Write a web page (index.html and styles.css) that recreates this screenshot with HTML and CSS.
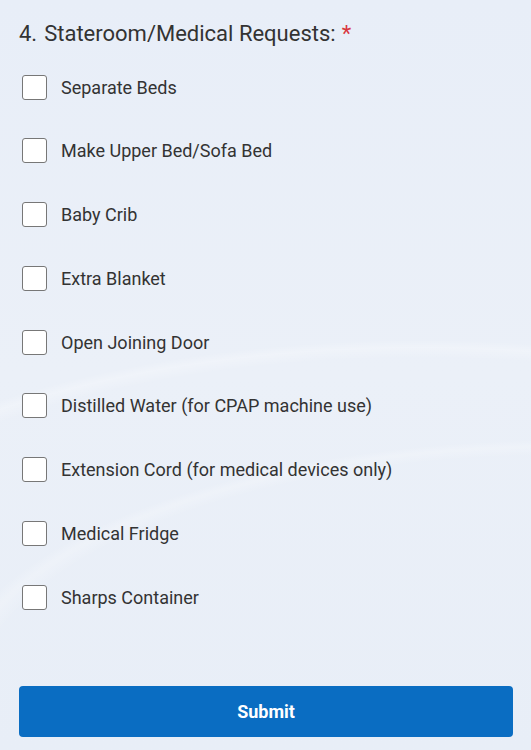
FILE: index.html
```html
<!DOCTYPE html>
<html lang="en">
<head>
<meta charset="utf-8">
<title>Stateroom/Medical Requests</title>
<link rel="stylesheet" href="styles.css">
</head>
<body>
<form class="form">
  <h2 class="question"><span class="num">4.</span><span class="qtext">Stateroom/Medical Requests:</span><span class="req">*</span></h2>
  <ul class="options">
    <li class="option"><span class="box"></span><span class="label">Separate Beds</span></li>
    <li class="option"><span class="box"></span><span class="label">Make Upper Bed/Sofa Bed</span></li>
    <li class="option"><span class="box"></span><span class="label">Baby Crib</span></li>
    <li class="option"><span class="box"></span><span class="label">Extra Blanket</span></li>
    <li class="option"><span class="box"></span><span class="label">Open Joining Door</span></li>
    <li class="option"><span class="box"></span><span class="label">Distilled Water (for CPAP machine use)</span></li>
    <li class="option"><span class="box"></span><span class="label">Extension Cord (for medical devices only)</span></li>
    <li class="option"><span class="box"></span><span class="label">Medical Fridge</span></li>
    <li class="option"><span class="box"></span><span class="label">Sharps Container</span></li>
  </ul>
  <button type="button" class="submit">Submit</button>
</form>
</body>
</html>
```
FILE: styles.css
```css
html, body {
  margin: 0;
  padding: 0;
}
body {
  width: 531px;
  height: 750px;
  overflow: hidden;
  font-family: Roboto, "Liberation Sans", Arial, sans-serif;
  color: #333;
  background-color: #e8eef7;
  background-image:
    radial-gradient(ellipse 620px 260px at 560px 700px, rgba(255,255,255,0) 94%, rgba(255,255,255,0.22) 97.5%, rgba(255,255,255,0) 100%),
    radial-gradient(ellipse 700px 300px at 420px 640px, rgba(255,255,255,0) 94%, rgba(255,255,255,0.25) 97.5%, rgba(255,255,255,0) 100%),
    linear-gradient(180deg, #e8eef8 0%, #ebf0f8 50%, #e8eef7 100%);
}
.form {
  padding: 19px 18px 0 19px;
}
.question {
  margin: 0;
  font-size: 22px;
  font-weight: 400;
  line-height: 30px;
  color: #333;
  display: flex;
  align-items: baseline;
}
.num {
  margin-right: 7px;
}
.req {
  color: #d9363e;
  margin-left: 6px;
}
.options {
  list-style: none;
  margin: 25px 0 0 0;
  padding: 0;
  display: flex;
  flex-direction: column;
  gap: 37.75px;
}
.option {
  display: flex;
  align-items: center;
  height: 26px;
  padding-left: 3px;
}
.box {
  width: 23px;
  height: 23px;
  border: 1.5px solid #777;
  border-radius: 3px;
  background: #fff;
  flex: none;
}
.label {
  margin-left: 14px;
  font-size: 18px;
  color: #333;
}
.submit {
  display: block;
  margin-top: 76px;
  width: 494px;
  height: 51px;
  border: none;
  border-radius: 4px;
  background: #0a6dc2;
  color: #fff;
  font-family: Roboto, "Liberation Sans", Arial, sans-serif;
  font-size: 18px;
  font-weight: 700;
}
```
